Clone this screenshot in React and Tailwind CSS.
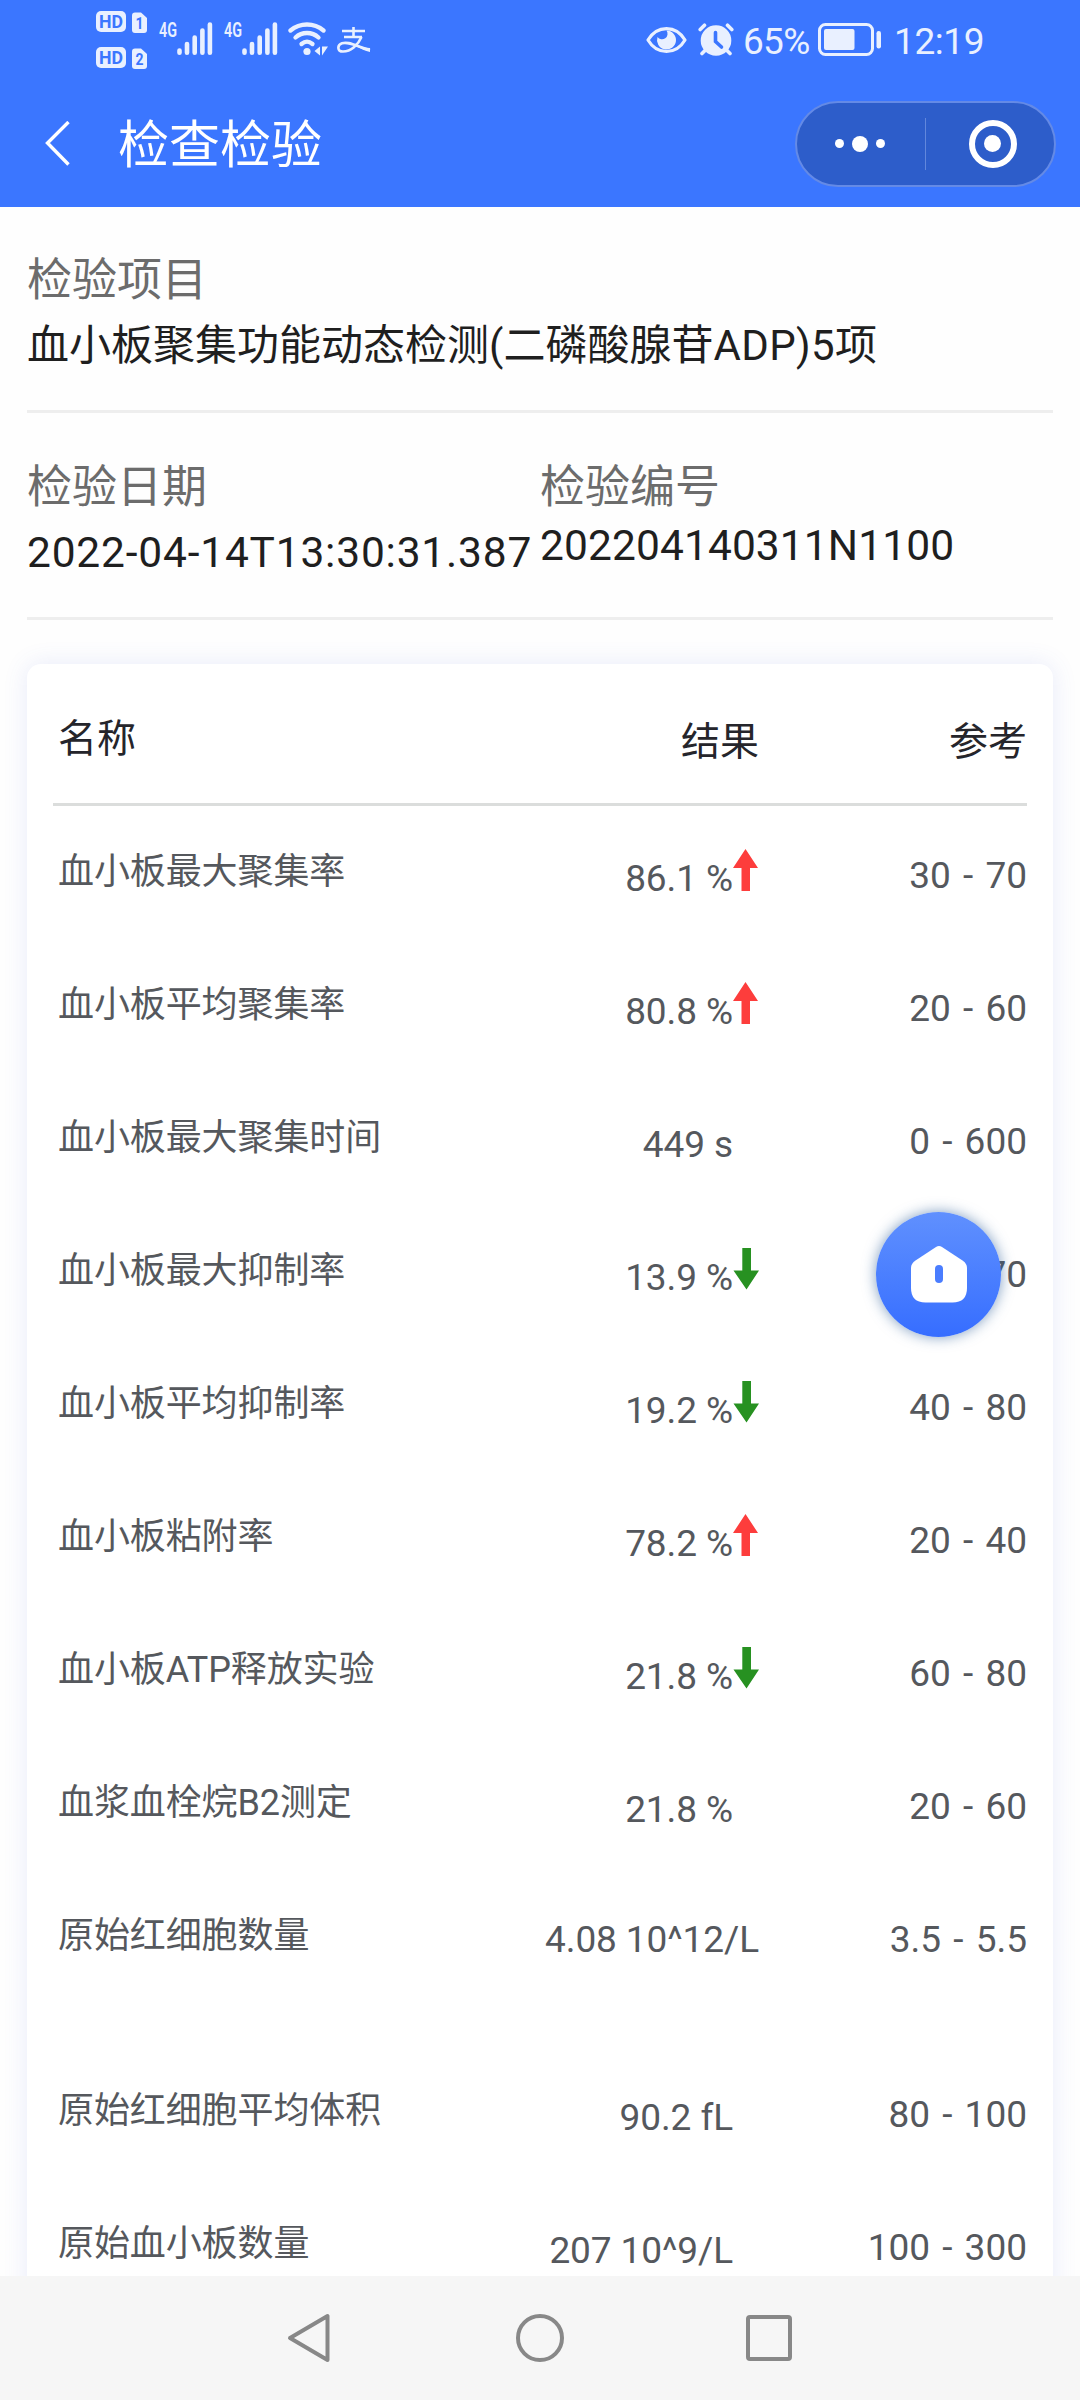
import React from 'react';

const rows = [
  { name: '血小板最大聚集率', result: '86.1 %', range: '30 - 70', flag: 'up' },
  { name: '血小板平均聚集率', result: '80.8 %', range: '20 - 60', flag: 'up' },
  { name: '血小板最大聚集时间', result: '449 s', range: '0 - 600' },
  { name: '血小板最大抑制率', result: '13.9 %', range: '30 - 70', flag: 'down' },
  { name: '血小板平均抑制率', result: '19.2 %', range: '40 - 80', flag: 'down' },
  { name: '血小板粘附率', result: '78.2 %', range: '20 - 40', flag: 'up' },
  { name: '血小板ATP释放实验', result: '21.8 %', range: '60 - 80', flag: 'down' },
  { name: '血浆血栓烷B2测定', result: '21.8 %', range: '20 - 60' },
  { name: '原始红细胞数量', result: '4.08 10^12/L', range: '3.5 - 5.5', wide: true },
  { name: '原始红细胞平均体积', result: '90.2 fL', range: '80 - 100' },
  { name: '原始血小板数量', result: '207 10^9/L', range: '100 - 300' },
];

const HdBadge = ({ sim }) => (
  <svg width="52" height="23" viewBox="0 0 52 23">
    <rect x="0" y="0" width="30" height="21" rx="5" fill="#e9f0ff" />
    <text x="15" y="17" textAnchor="middle" textLength="24" lengthAdjust="spacingAndGlyphs" fontSize="18" fontWeight="700" fill="#3b76ff">HD</text>
    <path d="M39 1.5h6l6 5.5v12a3 3 0 0 1-3 3h-9a3 3 0 0 1-3-3v-14.500a3 3 0 0 1 3-3z" fill="#e9f0ff" />
    <text x="43.500" y="18" textAnchor="middle" textLength="8" lengthAdjust="spacingAndGlyphs" fontSize="17" fontWeight="700" fill="#3b76ff">{sim}</text>
  </svg>
);

const Signal = () => (
  <svg className="-mt-2" width="54" height="42" viewBox="0 -8 54 42">
    <text x="0" y="14.500" textLength="18" lengthAdjust="spacingAndGlyphs" fontSize="19.500" fontWeight="600" fill="#e9f0ff">4G</text>
    <g stroke="#e9f0ff" strokeWidth="4.600" strokeLinecap="round">
      <path d="M20.500 28.500v2.200M28 22v8.700M35.700 15.500v15.200M43.400 8.500v22.200M50.900 2.500v28.200" />
    </g>
  </svg>
);

const Wifi = () => (
  <svg width="40" height="34" viewBox="0 0 40 34">
    <g fill="none" stroke="#e9f0ff" strokeWidth="4.300" strokeLinecap="round">
      <path d="M2.500 8.500C12 .5 26 .5 35.500 8.500" />
      <path d="M7.500 15.500c6.500-6 16.500-6 23 0" />
      <path d="M13.500 22c3.500-3 7.500-3 11 0" />
    </g>
    <circle cx="19" cy="29.500" r="3.600" fill="#e9f0ff" />
    <path d="M32 24.500v9l-5.500-4.500zM34 24.500h6l-6 9z" fill="#e9f0ff" />
  </svg>
);

const Alipay = () => (
  <svg width="34" height="28" viewBox="0 0 34 28" fill="none" stroke="#e9f0ff">
    <path d="M5 5h23M16.500 1v9.500M7 11h18" strokeWidth="2.600" />
    <path d="M24.500 11C21 19 14 25.500 6 25.500c-6 0-6-6.500-1-8.200C12 15 19 20.500 33 24" strokeWidth="2.600" />
    <path d="M19 18.500c5 2 9 3.200 14 3.600v4c-5-1-9-3-14-6z" fill="#e9f0ff" stroke="none" />
  </svg>
);

const Eye = () => (
  <svg width="41" height="28" viewBox="0 0 41 28">
    <path d="M2 14C11-1.300 30-1.300 39 14 30 29.300 11 29.300 2 14z" fill="none" stroke="#e9f0ff" strokeWidth="3.200" strokeLinejoin="round" />
    <path d="M20.500 4.500a9.500 9.500 0 1 1-9 6.500 4.800 4.800 0 1 0 9-6.500z" fill="#e9f0ff" />
  </svg>
);

const Alarm = () => (
  <svg width="36" height="34" viewBox="0 0 36 34">
    <g stroke="#e9f0ff" strokeWidth="3.600" strokeLinecap="round">
      <path d="M2.200 6.500l4.300-4.300M33.800 6.500l-4.300-4.300M7 27.500l-3 3M29 27.500l3 3" />
    </g>
    <circle cx="18" cy="17.500" r="15.300" fill="#e9f0ff" />
    <path d="M17.500 9.500v9l6 5.500" fill="none" stroke="#3b76ff" strokeWidth="3.600" strokeLinecap="round" />
  </svg>
);

const Battery = () => (
  <svg width="64" height="34" viewBox="0 0 64 34">
    <rect x="1.500" y="1.500" width="53" height="30" rx="6" fill="none" stroke="#e9f0ff" strokeWidth="3" />
    <rect x="6" y="6" width="30.500" height="21" rx="2" fill="#e9f0ff" />
    <rect x="58.500" y="8" width="4.500" height="17.500" rx="2.200" fill="#e9f0ff" />
  </svg>
);

const Arrow = ({ flag }) => {
  if (flag === 'up') {
    return (
      <svg width="26" height="42" viewBox="0 0 26 42">
        <path d="M12.500 0L25 19h-8v23H8.500V19H0z" fill="#fd3d3c" />
      </svg>
    );
  }
  return (
    <svg width="26" height="42" viewBox="0 0 26 42">
      <path d="M13.500 41.500L.5 22.500h8.800V0H18v22.500h8z" fill="#279121" />
    </svg>
  );
};

const StatusBar = () => (
  <div className="flex h-[80px] justify-between pl-24 pr-[96px]">
    <div className="flex">
      <div className="flex flex-col gap-[13px] pt-[11px]">
        <HdBadge sim="1" />
        <HdBadge sim="2" />
      </div>
      <div className="ml-[11px] flex gap-[11px] pt-[22px]">
        <Signal />
        <Signal />
      </div>
      <div className="ml-[10px] pt-[22px]">
        <Wifi />
      </div>
      <div className="ml-[9px] pt-[26px]">
        <Alipay />
      </div>
    </div>
    <div className="flex h-[80px] items-center text-[37px] text-[#e9f0ff]">
      <Eye />
      <span className="ml-[11px]"><Alarm /></span>
      <span className="ml-[9px] w-[69px] whitespace-nowrap pt-[3px] leading-[80px] tracking-[-0.7px]">65%</span>
      <span className="ml-[6px]"><Battery /></span>
      <span className="ml-[12px] w-[90px] whitespace-nowrap pt-[3px] leading-[80px] tracking-[-0.4px]">12:19</span>
    </div>
  </div>
);

const TitleBar = () => (
  <div className="flex h-[127px] items-center pl-[45px] pr-6">
    <svg width="26" height="46" viewBox="0 0 26 46">
      <path d="M23.500 1L2.500 22l21 21.500" fill="none" stroke="#fff" strokeWidth="3.400" />
    </svg>
    <h1 className="ml-[47px] pt-[4px] text-[51px] leading-[60px] text-white">检查检验</h1>
    <div className="ml-auto flex h-[86px] w-[261px] items-center rounded-full border-2 border-[#648ae6] bg-[#2d5dca]">
      <div className="flex w-[128px] items-center justify-center gap-2 pr-[2px]">
        <span className="size-[9px] rounded-full bg-white"></span>
        <span className="size-[16px] rounded-full bg-white"></span>
        <span className="size-[9px] rounded-full bg-white"></span>
      </div>
      <div className="h-[52px] w-px bg-[#6287dc]"></div>
      <div className="flex flex-1 items-center justify-center pl-[5px]">
        <div className="flex size-12 items-center justify-center rounded-full border-[6px] border-white">
          <span className="size-[17px] rounded-full bg-white"></span>
        </div>
      </div>
    </div>
  </div>
);

const HomeButton = () => (
  <button className="absolute left-[876px] top-[1212px] flex size-[125px] items-center justify-center rounded-full bg-linear-to-b from-[#6090fe] to-[#366dff] shadow-[0_0_14px_rgba(40,90,150,0.6)]">
    <svg width="56" height="57" viewBox="0 0 56 57">
      <path d="M25 1q3-1.800 6 0L51.500 14.500Q56 17.500 56 22v20q0 14.500-14.500 14.500h-27Q0 56.500 0 42V22q0-4.500 4.500-7.500z" fill="#fff" />
      <rect x="24" y="19" width="8" height="18" rx="4" fill="#4a7dff" />
    </svg>
  </button>
);

const NavBar = () => (
  <div className="flex h-[124px] items-center bg-[#f6f6f6] pl-[286px]">
    <svg width="46" height="52" viewBox="0 0 46 52">
      <path d="M41.500 4v44L4 26z" fill="none" stroke="#888" strokeWidth="4" strokeLinejoin="round" />
    </svg>
    <div className="ml-[184px] size-12 rounded-full border-4 border-[#888]"></div>
    <div className="ml-[182px] size-[46px] rounded-[4px] border-4 border-[#888]"></div>
  </div>
);

const App = () => {
  return (
    <div className="relative flex h-[2400px] w-[1080px] flex-col overflow-hidden bg-[#fefefe] font-[Roboto,'Noto_Sans_CJK_SC',sans-serif]">
      <header className="h-[207px] shrink-0 bg-[#3b76ff]">
        <StatusBar />
        <TitleBar />
      </header>

      <main className="h-[2069px] shrink-0 overflow-hidden px-[27px]">
        {/* Test info */}
        <section className="h-[206px] border-b-3 border-[#eee] pt-[41px]">
          <div className="text-[45px] leading-[66px] text-[#6c6c6c]">检验项目</div>
          <div className="whitespace-nowrap text-[42px] leading-[64px] text-[#1f1f1f]">血小板聚集功能动态检测(二磷酸腺苷<span className="tracking-[0.4px]">ADP)5</span>项</div>
        </section>
        <section className="flex h-[207px] border-b-3 border-[#eee] pt-[42px]">
          <div className="w-[513px]">
            <div className="text-[45px] leading-[66px] text-[#6c6c6c]">检验日期</div>
            <div className="whitespace-nowrap text-[42.500px] leading-[63px] tracking-[0.8px] text-[#1f1f1f]">2022-04-14T13:30:31.387</div>
          </div>
          <div>
            <div className="text-[45px] leading-[66px] text-[#6c6c6c]">检验编号</div>
            <div className="whitespace-nowrap text-[42.500px] leading-[49px] tracking-[0.1px] text-[#1f1f1f]">202204140311N1100</div>
          </div>
        </section>

        {/* Results */}
        <section className="mt-[44px] h-[1700px] rounded-[14px] bg-white px-[26px] shadow-[0_0_24px_rgba(80,100,220,0.13)]">
          <div className="flex h-[142px] border-b-3 border-[#dbdddc] text-[39px] leading-[60px] text-[#25252b]">
            <div className="w-[300px] pl-[5px] pt-[45px]">名称</div>
            <div className="w-[406px] pt-[48px] text-right">结果</div>
            <div className="flex-1 pt-[48px] text-right">参考</div>
          </div>
          {rows.map((row) => (
            <div key={row.name} className={`flex text-[#55585d] ${row.wide ? 'h-[175px]' : 'h-[133px]'}`}>
              <div className="w-[400px] pl-[5px] text-[36px] leading-[133px] tracking-[-0.1px]">{row.name}</div>
              <div className={`flex w-[306px] justify-end whitespace-nowrap text-[37px] leading-[133px] tracking-[-0.1px] ${row.wide ? 'pt-[3px]' : 'pt-[6px]'}`}>
                <span>{row.result}</span>
                {!row.wide && (
                  <span className="w-[26px] pt-[37px]">{row.flag && <Arrow flag={row.flag} />}</span>
                )}
              </div>
              <div className="flex-1 pt-[3px] text-right text-[37px] leading-[133px] [word-spacing:3px]">{row.range}</div>
            </div>
          ))}
        </section>
      </main>

      <HomeButton />
      <NavBar />
    </div>
  );
};

export default App;
